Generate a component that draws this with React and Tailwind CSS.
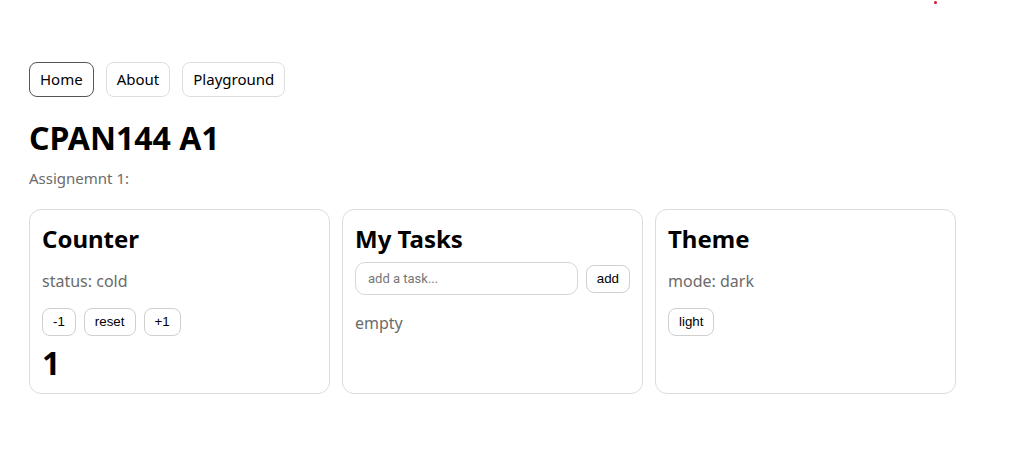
import { useState } from "react";

function Card({ children }) {
  return (
    <section className="h-[185px] rounded-xl border border-[#dcdcdc] bg-white px-3 pt-[13px]">
      {children}
    </section>
  );
}

function SmallButton({ label, onClick }) {
  return (
    <button
      onClick={onClick}
      className="h-7 rounded-lg border border-[#cfcfcf] bg-white px-[10px] font-['Liberation_Sans',Arial,sans-serif] text-[13.33px] text-black"
    >
      {label}
    </button>
  );
}

export default function App() {
  const [count, setCount] = useState(1);
  const [task, setTask] = useState("");
  const [tasks, setTasks] = useState([]);
  const [mode, setMode] = useState("dark");

  const addTask = () => {
    if (!task.trim()) return;
    setTasks([...tasks, task.trim()]);
    setTask("");
  };

  return (
    <div className="relative min-h-[458px] bg-white pl-[29px] pt-[62px] font-['Noto_Sans',sans-serif] text-black">
      {/* stray dot */}
      <span className="absolute left-[934px] top-[1px] h-[3px] w-[3px] rounded-full bg-[#e0102f]" />

      {/* NAV */}
      <nav className="flex gap-3">
        <button className="h-[35px] rounded-lg border border-[#555] px-[10px] text-[15px]">
          Home
        </button>
        <button className="h-[35px] rounded-lg border border-[#dedede] px-[10px] text-[15px]">
          About
        </button>
        <button className="h-[35px] rounded-lg border border-[#dedede] px-[10px] text-[15px]">
          Playground
        </button>
      </nav>

      <h1 className="mt-[21px] text-[32px] font-bold leading-10">CPAN144 A1</h1>
      <p className="mt-[10px] text-[15px] leading-5 text-[#6b6b6b]">Assignemnt 1:</p>

      {/* CARDS */}
      <div className="mt-[21px] grid w-[927px] grid-cols-3 gap-3">
        <Card>
          <h2 className="text-2xl font-bold leading-8">Counter</h2>
          <p className="mt-[14px] text-base leading-6 text-[#6b6b6b]">
            status: {count > 5 ? "hot" : "cold"}
          </p>
          <div className="mt-[15px] flex gap-2">
            <SmallButton label="-1" onClick={() => setCount(count - 1)} />
            <SmallButton label="reset" onClick={() => setCount(0)} />
            <SmallButton label="+1" onClick={() => setCount(count + 1)} />
          </div>
          <div className="mt-[7px] text-[32px] font-bold leading-10">{count}</div>
        </Card>

        <Card>
          <h2 className="text-2xl font-bold leading-8">My Tasks</h2>
          <div className="mt-[7px] flex items-center gap-2">
            <input
              value={task}
              onChange={(e) => setTask(e.target.value)}
              placeholder="add a task..."
              className="h-[33px] flex-1 rounded-[10px] border border-[#d6d6d6] px-3 font-['Roboto',sans-serif] text-[13px] outline-none placeholder:text-[#777]"
            />
            <SmallButton label="add" onClick={addTask} />
          </div>
          {tasks.length === 0 ? (
            <p className="mt-4 text-base leading-6 text-[#6b6b6b]">empty</p>
          ) : (
            <ul className="mt-4 text-base leading-6">
              {tasks.map((t, i) => (
                <li key={i}>{t}</li>
              ))}
            </ul>
          )}
        </Card>

        <Card>
          <h2 className="text-2xl font-bold leading-8">Theme</h2>
          <p className="mt-[14px] text-base leading-6 text-[#6b6b6b]">mode: {mode}</p>
          <div className="mt-[15px] flex gap-2">
            <SmallButton
              label={mode === "dark" ? "light" : "dark"}
              onClick={() => setMode(mode === "dark" ? "light" : "dark")}
            />
          </div>
        </Card>
      </div>
    </div>
  );
}
